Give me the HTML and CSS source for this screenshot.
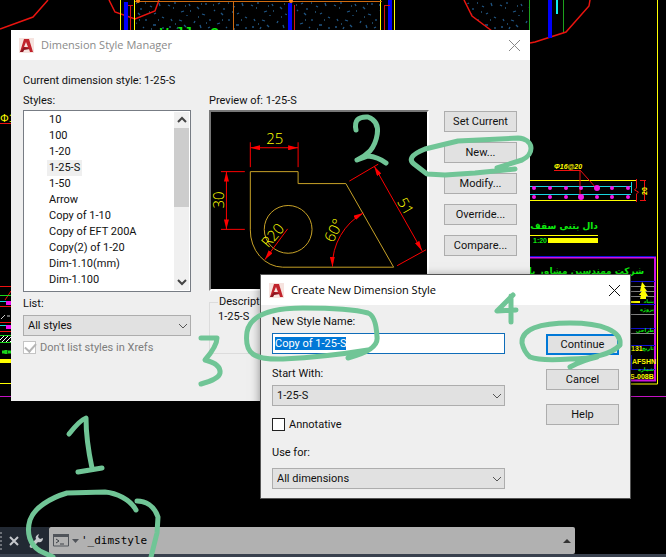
FILE: index.html
```html
<!DOCTYPE html>
<html lang="en">
<head>
<meta charset="utf-8">
<title>Dimension Style Manager</title>
<link rel="stylesheet" href="styles.css">
</head>
<body>
<svg class="drawing" width="666" height="557" viewBox="0 0 666 557" aria-hidden="true">
  <defs>
    <pattern id="speckle" width="83" height="31" patternUnits="userSpaceOnUse">
      <path d="M2 5l2 1M9 2v2M15 12l3-1M23 4l1 2M31 7l2 2M40 3v2M5 19l1 2M13 20l3 1M21 15v1M28 23l1-2M36 14l3 1M44 19v2M3 27h2M11 29l1-2M18 25l2 2M34 25l1 3M42 28l2-1M52 4l2-1M58 8v2M55 13l2 2M67 6l2 1M76 3l1 3M71 14l2-1M63 19v2M79 17l2 1M51 24l3-1M60 27l1 1M70 25h3M80 27v2M48 10l1 1" stroke="#1f5583" stroke-width="1.3"/>
      <path d="M7 8h1M19 6h1M35 4h1M9 24h1M32 17h1M40 23h1M24 11h1M47 5h1M62 3h1M66 12h1M75 20h1M56 20h1M68 29h1" stroke="#3b87bd"/>
    </pattern>
    <pattern id="hatch" width="4" height="4" patternUnits="userSpaceOnUse"><path d="M0 4L4 0" stroke="#fff"/></pattern>
  </defs>
  <g fill="none">
    <path fill="url(#speckle)" d="M136 2h151v28H136zM295 2h85v28h-85zM466 0h63v30h-41l-16-14z"/>
    <path d="M0 29l33-12L48 0M109 0l6 12 20 7 20-8 4-11M464 0l8 16 20 15M530 43l5-1 31-10 23-26 1-6" stroke="#e9140f" stroke-width="1.5"/>
    <path d="M120.500 0v30M134.500 0v30M380.500 0v30M394.500 0v30" stroke="#ff0"/>
    <path d="M126 2v28M290 3v27M390 0v30M550 0v38" stroke="#0000fa" stroke-width="4"/>
    <path d="M130.500 5v25M128 5.500h5M294.500 5v25M384.500 5v25M384 5.500h6" stroke="#d81313"/>
    <path d="M135 1.500h247M233.500 1v29" stroke="#d06b10"/>
    <circle cx="291" cy="1" r="2" fill="#ff8214"/><circle cx="138" cy="1" r="2" fill="#ff8214"/>
    <path d="M529.500 0v30M563.500 0v32" stroke="#1ca01c"/>
    <path d="M557 0v14" stroke="#1ee" stroke-width="2"/>
    <path d="M657.500 0v384H630" stroke="#ff0"/>
    <path d="M529 180.500h107M529 200.500h107M529 235.500h69" stroke="#ff0"/>
    <path d="M529 186.500h102M529 194.500h102M631.500 182v11" stroke="#18d6e0"/>
    <path d="M554 170.500h26v28M580 170l17 19M636.500 179v9l-2 2 4 2-2 2v8M640 180.500h6M640 200.500h6M644.500 180v21" stroke="#e11"/>
  </g>
  <g fill="#f315e8">
    <circle cx="534" cy="188" r="2"/><circle cx="550" cy="188" r="2"/><circle cx="566" cy="188" r="2"/><circle cx="581" cy="188" r="2"/><circle cx="597" cy="188" r="3"/><circle cx="612" cy="188" r="2"/><circle cx="628" cy="188" r="2"/>
    <circle cx="534" cy="197" r="2"/><circle cx="550" cy="197" r="2"/><circle cx="566" cy="197" r="2"/><circle cx="581" cy="197" r="3"/><circle cx="597" cy="197" r="2"/><circle cx="612" cy="197" r="2"/><circle cx="628" cy="197" r="2"/>
  </g>
  <path d="M548 238h50v5h-50z" fill="#ff0"/>
  <g fill="none">
    <path d="M529 257.500h126v123H630" stroke="#d011e0" stroke-width="2"/>
    <path d="M529 256.500h126M630 281.500h25M630 304.500h25M630 328.500h25M630 345.500h25M630 369.500h25M631.500 355v15" stroke="#1111d8"/>
    <path d="M630 286.500h25M630 291.500h25M630 296.500h25M630 314.500h25M630 333.500h25" stroke="#888"/>
    <path d="M630 396.500h36M0 396.500h11" stroke="#c512c5"/>
  </g>
  <path d="M642 282l4 5h-2l3 4h-2l3 5h-2v3h-6l1-4h-2l3-4h-2zM631 301h9v2h-9z" fill="#ff0"/>
  <g>
    <text x="554" y="169" class="cad-yellow cad-italic">Φ16@20</text>
    <text x="533" y="243" class="cad-green cad-small">1:20</text>
    <text transform="translate(647 195) rotate(-90)" class="cad-yellow cad-small">20</text>
    <text x="160" y="38" class="cad-green cad-wall">Wall  S</text>
    <text x="631" y="351" class="cad-yellow cad-small">131</text>
    <text x="632" y="364" class="cad-yellow cad-small">AFSHN</text>
    <text x="630" y="379" class="cad-yellow cad-small">S-008B</text>
    <text x="0" y="122" class="cad-yellow cad-phi">Φ1</text>
    <text x="598" y="229" direction="rtl" class="cad-green cad-arabic">دال بتنی سقف انبار</text>
    <text x="644" y="274" direction="rtl" class="cad-green cad-arabic">شرکت مهندسین مشاور پارس</text>
    <text x="654" y="303" direction="rtl" class="cad-green cad-tiny">بنیاد</text>
    <text x="654" y="311" direction="rtl" class="cad-green cad-tiny">پروژه</text>
    <text x="654" y="332" direction="rtl" class="cad-green cad-tiny">طراحی</text>
    <text x="654" y="350" direction="rtl" class="cad-green cad-tiny">تاریخ</text>
    <text x="654" y="371" direction="rtl" class="cad-green cad-tiny">شماره</text>
  </g>
  <g fill="none">
    <path d="M0 286.500h11M0 306.500h11M0 322.500h11M0 331.500h11M5 300l6-9M0 123.500h11" stroke="#e11"/>
    <path d="M0 295.500h11M0 335.500h11M0 342.500h11" stroke="#1bd61b"/>
    <path d="M2 352h3M6 350v4M8 352h3" stroke="#1bd61b" stroke-width="3"/>
    <path d="M0 301.500h11M0 325.500h11" stroke="#1dd"/>
    <path d="M6 303h5M6 327h5" stroke="#e1e" stroke-width="4"/>
    <path d="M0 336h11v6H0z" fill="url(#hatch)"/>
    <path d="M1 319l4-4M7 316h3" stroke="#ccc"/>
    <path d="M0 361h11" stroke="#ff0" stroke-width="4"/>
    <path d="M0 383.500h11" stroke="#ff0"/>
  </g>
</svg>

<section class="window manager" aria-labelledby="manager-title">
  <header class="titlebar inactive">
    <svg class="logo" viewBox="0 0 15 15" aria-hidden="true"><path d="M0 0h15v15H0z" fill="#f6e3df"/><path fill-rule="evenodd" d="M5 1h5l4 13h-3l-1-3H5l-1 3H1zM7 4L5 9h4z" fill="#c1232c"/><path d="M1 14l4-5 6 2-6 1-1 2z" fill="#8c1620"/></svg>
    <h1 id="manager-title">Dimension Style Manager</h1>
    <button class="close" aria-label="Close"><svg viewBox="0 0 11 11"><path d="M0 0l11 11M11 0L0 11"/></svg></button>
  </header>
  <div class="manager-body">
    <p class="current">Current dimension style: 1-25-S</p>
    <div class="manager-grid">
      <div>
        <p class="caption" id="styles-label">Styles:</p>
        <div class="listbox">
          <ul role="listbox" aria-labelledby="styles-label">
            <li role="option">10</li>
            <li role="option">100</li>
            <li role="option">1-20</li>
            <li role="option" aria-selected="true"><span class="current-item">1-25-S</span></li>
            <li role="option">1-50</li>
            <li role="option">Arrow</li>
            <li role="option">Copy of 1-10</li>
            <li role="option">Copy of EFT 200A</li>
            <li role="option">Copy(2) of 1-20</li>
            <li role="option">Dim-1.10(mm)</li>
            <li role="option">Dim-1.100</li>
          </ul>
          <div class="scrollbar">
            <svg viewBox="0 0 15 16"><path d="M4 10l4-4 4 4"/></svg>
            <div class="thumb"></div>
            <svg class="down" viewBox="0 0 15 16"><path d="M4 6l4 4 4-4"/></svg>
          </div>
        </div>
        <label class="list-label" for="list-filter">List:</label>
        <div class="combo"><select id="list-filter"><option>All styles</option></select><svg viewBox="0 0 10 6"><path d="M1 1l4 4 4-4"/></svg></div>
        <label class="check disabled"><input type="checkbox" checked disabled>Don't list styles in Xrefs</label>
      </div>
      <div class="preview-column">
        <p class="caption">Preview of: 1-25-S</p>
        <div class="preview">
          <svg viewBox="0 0 217 177" role="img" aria-label="Dimension style preview">
            <defs><marker id="arrow" viewBox="0 0 10 5" refX="10" refY="2.500" markerWidth="10" markerHeight="5" orient="auto-start-reverse"><path d="M0 0l10 2.500L0 5z" fill="#f00"/></marker></defs>
            <g fill="none" stroke="#c9a227" transform="translate(-2 -2)">
              <path d="M41.500 61.500h48v12h48l48 84H74A33 37 0 0 1 41.500 120z"/>
              <circle cx="79.500" cy="119.500" r="24"/>
            </g>
            <g fill="none" stroke="#f00" transform="translate(-2 -2)">
              <path d="M41.500 32v25M89.500 32v25M12 61.500h24M12 119.500h24M141 71l29-17M189 156l29-16"/>
              <path d="M41.500 37.500h48" marker-start="url(#arrow)" marker-end="url(#arrow)"/>
              <path d="M17.500 61.500v58" marker-start="url(#arrow)" marker-end="url(#arrow)"/>
              <path d="M79 119l-23 31" marker-end="url(#arrow)"/>
              <path d="M124 157A61 61 0 0 1 155 103" marker-start="url(#arrow)" marker-end="url(#arrow)"/>
              <path d="M166 56l48 85" marker-start="url(#arrow)" marker-end="url(#arrow)"/>
            </g>
            <g class="dim-text">
              <text x="64" y="32">25</text>
              <text transform="translate(13 88) rotate(-90)">30</text>
              <text transform="translate(66 127) rotate(-49)">R20</text>
              <text transform="translate(128 121) rotate(-63)">60°</text>
              <text transform="translate(191 97) rotate(60)">51</text>
            </g>
          </svg>
        </div>
        <fieldset class="description"><legend>Description</legend>1-25-S</fieldset>
      </div>
      <div class="manager-actions">
        <button>Set Current</button>
        <button>New...</button>
        <button>Modify...</button>
        <button>Override...</button>
        <button>Compare...</button>
      </div>
    </div>
  </div>
</section>

<section class="window create" aria-labelledby="create-title">
  <header class="titlebar">
    <svg class="logo" viewBox="0 0 15 15" aria-hidden="true"><path d="M0 0h15v15H0z" fill="#f6e3df"/><path fill-rule="evenodd" d="M5 1h5l4 13h-3l-1-3H5l-1 3H1zM7 4L5 9h4z" fill="#c1232c"/><path d="M1 14l4-5 6 2-6 1-1 2z" fill="#8c1620"/></svg>
    <h2 id="create-title">Create New Dimension Style</h2>
    <button class="close" aria-label="Close"><svg viewBox="0 0 11 11"><path d="M0 0l11 11M11 0L0 11"/></svg></button>
  </header>
  <div class="create-body">
    <div class="fields">
      <label for="style-name">New Style Name:</label>
      <input class="name" id="style-name" type="text" value="Copy of 1-25-S" autofocus>
      <label class="start" for="start-with">Start With:</label>
      <div class="combo"><select id="start-with"><option>1-25-S</option></select><svg viewBox="0 0 10 6"><path d="M1 1l4 4 4-4"/></svg></div>
      <label class="check annotative"><input type="checkbox">Annotative</label>
      <label class="use" for="use-for">Use for:</label>
      <div class="combo"><select id="use-for"><option>All dimensions</option></select><svg viewBox="0 0 10 6"><path d="M1 1l4 4 4-4"/></svg></div>
    </div>
    <div class="create-actions">
      <button class="default">Continue</button>
      <button>Cancel</button>
      <button>Help</button>
    </div>
  </div>
</section>

<footer class="command-bar">
  <div class="command-row">
    <div class="tools">
      <svg class="grip" viewBox="0 0 3 18" aria-hidden="true"><path d="M0 1h2M0 5h2M0 9h2M0 13h2M0 17h2"/></svg>
      <button aria-label="Close command line"><svg viewBox="0 0 10 10"><path d="M1 1l8 8M9 1L1 9" fill="none" stroke="#c5c8cc" stroke-width="2"/></svg></button>
      <button class="wrench" aria-label="Customize"><svg viewBox="0 0 14 14"><path d="M1 11l6-6c-1-2 0-4 3-5L9 3l2 2 3-1c0 3-2 5-5 4l-6 6c-2 0-3-1-2-3z" fill="#c5c8cc"/></svg></button>
    </div>
    <div class="prompt">
      <svg class="console" viewBox="0 0 27 13" aria-hidden="true"><path d="M.5 1h15v11H.5z" fill="none" stroke="#50545a"/><path d="M0 0h16v3H0z" fill="#50545a"/><path d="M3 5l3 2-3 2M7 10h4" fill="none" stroke="#3c4046"/><path d="M19 5h7l-3.500 4z" fill="#50545a"/></svg>
      <input type="text" value="'_dimstyle" aria-label="Command">
      <button class="history" aria-label="Command history"><svg viewBox="0 0 8 4"><path d="M0 4l4-4 4 4z" fill="#333"/></svg></button>
    </div>
  </div>
</footer>

<svg class="notes" width="666" height="557" viewBox="0 0 666 557" role="img" aria-label="Steps 1 to 4">
  <path d="M69 434Q80 420 86 418Q86 440 92 468M78 472L102 468"/>
  <path d="M136 510C130 499 116 493 105 492L67 493C50 498 34 508 30 520C26 533 30 545 40 551L53 557M137 501C145 501 154 505 158 517L157 533L151 557"/>
  <path d="M356 130Q353 116 368 117C385 123 375 145 370 151Q364 157 357 160L368 156Q378 157 386 163"/>
  <path d="M497 168L522 160C535 154 534 139 518 138L458 141L425 149C410 155 409 160 414 164L427 174L445 175L475 173L515 169"/>
  <path d="M201 338L217 338Q217 346 205 360Q221 364 220 373Q219 379 201 384"/>
  <path d="M348 358Q379 350 377 337Q376 316 368 313Q350 308 303 308C270 308 250 316 247 332C244 354 254 360 283 359Q325 357 368 350"/>
  <path d="M513 295L497 311L516 310M511 296V322"/>
  <path d="M570 367Q583 360 597 357M620 345C622 331 602 323 570 323C540 323 521 329 522 343Q524 352 530 357Q540 361 570 359C592 359 612 354 620 345"/>
</svg>
<script src="select.js"></script>
</body>
</html>
```
FILE: styles.css
```css
* { box-sizing: border-box; }
body {
  margin: 0;
  min-height: 100vh;
  display: flex;
  flex-direction: column;
  position: relative;
  overflow: hidden;
  background: #000;
  color: #111;
  font: 11px/16px Roboto, "Liberation Sans", sans-serif;
}
p, h1, h2, ul { margin: 0; padding: 0; }
button, input, select { font: inherit; color: inherit; }
svg { display: block; }

.drawing { position: absolute; left: 0; top: 0; }
.cad-yellow { fill: #ff0; }
.cad-green { fill: #0eea0e; }
.cad-italic { font: italic bold 7px "Liberation Sans", sans-serif; }
.cad-small { font: bold 7px "Liberation Sans", sans-serif; }
.cad-tiny { font: bold 5px "DejaVu Sans", sans-serif; }
.cad-wall { font: bold 14px "Liberation Mono", monospace; white-space: pre; }
.cad-phi { font: 11px "Liberation Sans", sans-serif; }
.cad-arabic { font: bold 9px "DejaVu Sans", sans-serif; }

.window { position: absolute; background: #efefef; }
.manager { left: 11px; right: 136px; top: 30px; }
.create {
  left: 261px;
  right: 36px;
  top: 275px;
  box-shadow: 0 0 0 1px #555, 0 2px 10px rgba(0, 0, 0, .5);
}

.titlebar {
  display: flex;
  align-items: center;
  gap: 7px;
  height: 30px;
  padding: 0 10px 0 8px;
  background: #fff;
}
.titlebar h1, .titlebar h2 {
  flex: 1;
  font: 11px/16px "Open Sans", "Noto Sans", sans-serif;
  color: #000;
}
.titlebar.inactive h1 { color: #8a8a8a; }
.logo { width: 15px; height: 15px; }
.close { width: 11px; height: 11px; padding: 0; border: 0; background: none; }
.close svg { overflow: visible; fill: none; stroke: #111; }
.inactive .close svg { stroke: #888; }

.manager-body { padding: 11px 13px 47px 12px; }
.current { line-height: 20px; }
.caption { line-height: 19px; }
.manager-grid {
  display: grid;
  grid-template-columns: 168px minmax(0, 1fr) 73px;
  column-gap: 15px;
}
.preview-column { padding-left: 3px; }

.listbox {
  display: flex;
  justify-content: space-between;
  height: 182px;
  padding: 1px;
  border: 1px solid #777c84;
  background: #fff;
}
.listbox ul { list-style: none; padding-left: 24px; }
.current-item { display: inline-block; margin-left: -2px; padding: 0 2px; background: #efefef; }
.scrollbar { display: flex; flex-direction: column; width: 15px; background: #f0f0f0; }
.scrollbar svg { width: 15px; height: 16px; fill: none; stroke: #444; stroke-width: 2; }
.thumb { height: 79px; background: #cdcdcd; }
.scrollbar .down { margin-top: auto; }

.list-label { display: block; margin: 4px 0 3px; }
.combo { position: relative; }
.combo select {
  display: block;
  width: 100%;
  height: 21px;
  padding: 0 4px;
  border: 1px solid #adadad;
  border-radius: 0;
  background: #e1e1e1;
  appearance: none;
}
.combo svg {
  position: absolute;
  right: 3px;
  top: 8px;
  width: 10px;
  height: 6px;
  fill: none;
  stroke: #555;
  pointer-events: none;
}
.check { display: flex; align-items: center; gap: 4px; height: 13px; }
.check input {
  width: 13px;
  height: 13px;
  margin: 0;
  border: 1px solid #222;
  background: #fff;
  appearance: none;
}
.check.disabled { margin-top: 5px; color: #7d7d7d; }
.check.disabled input { border-color: #c4c4c4; }
.check.disabled input::before {
  content: "";
  display: block;
  width: 9px;
  height: 5px;
  margin: 1px 0 0 1px;
  border: solid #b5b5b5;
  border-width: 0 0 2px 2px;
  transform: rotate(-48deg);
}

.preview {
  height: 181px;
  border: solid;
  border-width: 2px;
  border-color: #777 #fff #fff #777;
  background: #000;
  overflow: hidden;
}
.preview svg { width: 100%; height: 177px; }
.dim-text { fill: #ff0; font: 300 15px "Open Sans", sans-serif; text-anchor: middle; }
.description {
  height: 60px;
  margin: 3px 0 0;
  padding: 0 8px;
  border: 1px solid #dcdcdc;
  line-height: 14px;
}
.description legend { padding: 0 1px; line-height: 16px; }

.manager-actions { display: flex; flex-direction: column; gap: 10px; padding-top: 20px; }
.manager-actions button, .create-actions button {
  height: 21px;
  padding: 0;
  border: 1px solid #adadad;
  background: #e1e1e1;
}

.create-body {
  display: grid;
  grid-template-columns: 1fr 73px;
  column-gap: 41px;
  padding: 9px 11px 9px 11px;
}
.fields { display: flex; flex-direction: column; }
.name {
  width: 100%;
  height: 21px;
  margin-top: 3px;
  padding: 0 2px;
  border: 1px solid #0f6db9;
  border-radius: 0;
  background: #fff;
  outline: none;
}
.name::selection { background: #0078d7; color: #fff; }
.start { margin: 12px 0 3px; }
.annotative { margin: 12px 0 14px; }
.use { margin-bottom: 7px; }
.create-actions { display: flex; flex-direction: column; gap: 14px; padding-top: 20px; }
.create-actions .default { border: 2px solid #0078d7; }

.command-bar { margin-top: auto; position: relative; border-bottom: 3px solid #39414e; }
.command-row { display: flex; height: 27px; padding-right: 91px; }
.tools {
  display: flex;
  align-items: center;
  gap: 6px;
  width: 49px;
  background: #222933;
}
.tools button { padding: 0; border: 0; background: none; }
.tools button svg { width: 10px; height: 10px; }
.tools .wrench svg { width: 14px; height: 14px; }
.tools .wrench { margin-left: 4px; }
.grip { width: 3px; height: 18px; stroke: #b8bbc0; }
.prompt {
  flex: 1;
  display: flex;
  align-items: center;
  padding: 0 4px;
  border-radius: 2px;
  background: #b1b1b1;
}
.console { width: 27px; height: 13px; }
.prompt input {
  flex: 1;
  min-width: 0;
  padding: 0 0 0 1px;
  border: 0;
  background: none;
  outline: none;
  font: 11px/16px "DejaVu Sans Mono", monospace;
  color: #000;
}
.history { padding: 0; border: 0; background: none; }
.history svg { width: 8px; height: 4px; }

.notes {
  position: absolute;
  left: 0;
  top: 0;
  pointer-events: none;
  fill: none;
  stroke: #70c596;
  stroke-width: 5;
  stroke-linecap: round;
  stroke-linejoin: round;
}
```
FILE: select.js
```js
const styleName = document.getElementById("style-name");
styleName.focus();
styleName.select();
```
